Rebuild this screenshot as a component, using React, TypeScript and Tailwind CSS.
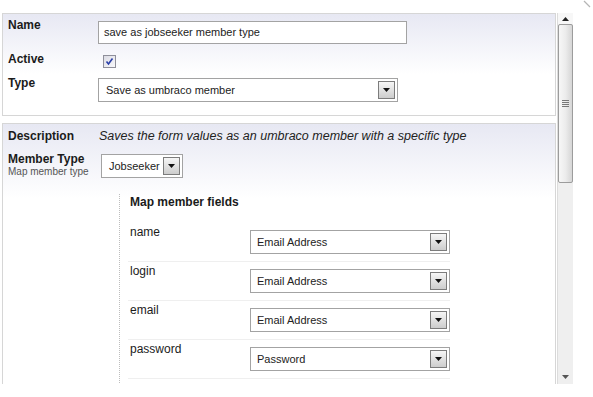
import React from "react";

const font = { fontFamily: '"Liberation Sans", Arial, sans-serif' };

function DropButton() {
  return (
    <div className="flex h-[18px] w-[17px] items-center justify-center border border-[#7c7c7c] bg-gradient-to-b from-[#f6f6f6] to-[#cdcdcd]">
      <svg width="7" height="4" viewBox="0 0 7 4">
        <path d="M0 0h7L3.5 4z" fill="#111" />
      </svg>
    </div>
  );
}

function Select({ value, className }: { value: string; className: string }) {
  return (
    <div className={`flex h-[24px] items-center justify-between border border-[#a3a3a3] bg-white pl-[6px] pr-[2px] text-[11px] text-[#222] ${className}`}>
      <span>{value}</span>
      <DropButton />
    </div>
  );
}

const fields = [
  { name: "name", value: "Email Address" },
  { name: "login", value: "Email Address" },
  { name: "email", value: "Email Address" },
  { name: "password", value: "Password" },
];

export default function App() {
  return (
    <div className="relative h-[397px] w-[593px] overflow-hidden bg-white text-[#1b1b1b]" style={font}>
      {/* resize cursor artefact */}
      <svg className="absolute left-[583px] top-0" width="8" height="8" viewBox="0 0 8 8">
        <path d="M1 1l6 6" stroke="#b5b5b5" strokeWidth="1.2" />
      </svg>

      <div className="flex pl-[2px] pt-[13px]">
        {/* Content */}
        <div className="h-[371px] w-[554px] overflow-hidden">
          {/* Panel 1 */}
          <div className="border border-[#d6d6d6] bg-gradient-to-b from-[#e7e8f3] via-white via-60% to-white px-[5px] pb-[13px] pt-[4px]">
            <div className="flex h-[26px]">
              <div className="w-[90px] text-[12px] font-bold leading-[14px]">Name</div>
              <div className="mt-[3px] flex h-[23px] w-[309px] items-center border border-[#a3a3a3] bg-white px-[5px] text-[11px] text-[#222]">
                save as jobseeker member type
              </div>
            </div>
            <div className="mt-[8px] flex h-[24px]">
              <div className="w-[90px] text-[12px] font-bold leading-[14px]">Active</div>
              <div className="ml-[5px] mt-[3px] flex h-[13px] w-[13px] items-center justify-center border border-[#8f8f9a] bg-gradient-to-br from-[#dcdce4] to-[#f8f8fb]">
                <svg width="9" height="9" viewBox="0 0 9 9">
                  <path d="M1.5 4.5l2 2.5L7.5 1.5" stroke="#2a3fa8" strokeWidth="1.6" fill="none" />
                </svg>
              </div>
            </div>
            <div className="flex">
              <div className="w-[90px] text-[12px] font-bold leading-[14px]">Type</div>
              <Select value="Save as umbraco member" className="mt-[2px] h-[23px] w-[300px] pl-[7px]" />
            </div>
          </div>

          {/* Panel 2 */}
          <div className="mt-[7px] h-[300px] border border-[#d6d6d6] bg-gradient-to-b from-[#e7e8f3] via-white via-[25%] to-white px-[5px] pt-[5px]">
            <div className="flex">
              <div className="w-[91px] text-[12px] font-bold leading-[14px]">Description</div>
              <div className="text-[12.5px] italic leading-[14px] text-[#222]">
                Saves the form values as an umbraco member with a specific type
              </div>
            </div>
            <div className="mt-[9px] flex">
              <div className="w-[93px]">
                <div className="text-[12px] font-bold leading-[14px]">Member Type</div>
                <div className="text-[10px] leading-[11px] text-[#555]">Map member type</div>
              </div>
              <Select value="Jobseeker" className="mt-[2px] w-[82px] pl-[7px]" />
            </div>

            <div className="ml-[111px] mt-[16px] border-l border-dotted border-[#bdbdbd] pl-[8px]">
              <div className="pl-[2px] text-[12px] font-bold leading-[16px]">Map member fields</div>
              <div className="mt-[13px] w-[322px]">
                {fields.map((f) => (
                  <div key={f.name} className="flex h-[39px] border-b border-[#efefef] pl-[2px]">
                    <div className="w-[120px] pt-[2px] text-[12px] leading-[14px]">{f.name}</div>
                    <Select value={f.value} className="mt-[7px] w-[200px]" />
                  </div>
                ))}
                <div className="h-[20px]" />
              </div>
            </div>
          </div>
        </div>

        {/* Scrollbar */}
        <div className="ml-[1px] flex h-[371px] w-[16px] flex-col border-l border-[#dcdcdc] bg-[#efefef]">
          <div className="flex h-[11px] items-center justify-center bg-[#f7f7f7]">
            <svg width="7" height="4" viewBox="0 0 7 4">
              <path d="M0 4h7L3.5 0z" fill="#222" />
            </svg>
          </div>
          <div className="flex h-[159px] items-center justify-center rounded-[2px] border border-[#9c9c9c] bg-gradient-to-r from-[#f7f7f7] via-[#ececec] to-[#d6d6d6]">
            <div className="flex flex-col gap-[1px]">
              <div className="h-[1px] w-[7px] bg-[#777]" />
              <div className="h-[1px] w-[7px] bg-[#777]" />
              <div className="h-[1px] w-[7px] bg-[#777]" />
              <div className="h-[1px] w-[7px] bg-[#777]" />
            </div>
          </div>
          <div className="flex-1" />
          <div className="flex h-[14px] items-center justify-center">
            <svg width="7" height="4" viewBox="0 0 7 4">
              <path d="M0 0h7L3.5 4z" fill="#555" />
            </svg>
          </div>
        </div>
      </div>
    </div>
  );
}
